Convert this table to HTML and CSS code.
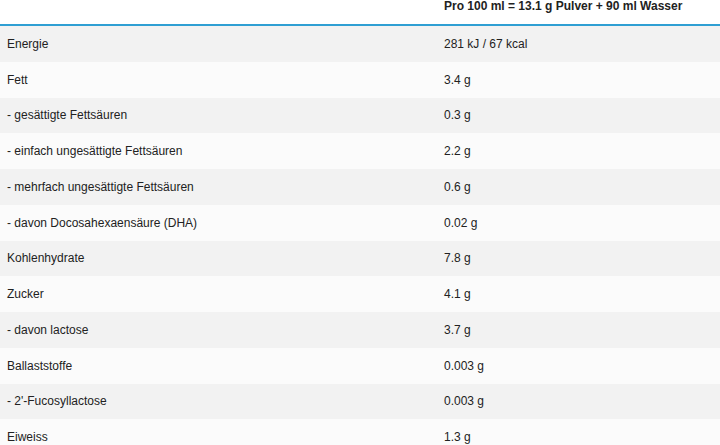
FILE: index.html
```html
<!DOCTYPE html>
<html lang="de">
<head>
<meta charset="utf-8">
<link rel="stylesheet" href="styles.css">
</head>
<body>
<div class="table">
  <div class="row head"><div class="cell"></div><div class="cell">Pro 100 ml = 13.1 g Pulver + 90 ml Wasser</div></div>
  <div class="row odd"><div class="cell">Energie</div><div class="cell">281 kJ / 67 kcal</div></div>
  <div class="row even"><div class="cell">Fett</div><div class="cell">3.4 g</div></div>
  <div class="row odd"><div class="cell">- gesättigte Fettsäuren</div><div class="cell">0.3 g</div></div>
  <div class="row even"><div class="cell">- einfach ungesättigte Fettsäuren</div><div class="cell">2.2 g</div></div>
  <div class="row odd"><div class="cell">- mehrfach ungesättigte Fettsäuren</div><div class="cell">0.6 g</div></div>
  <div class="row even"><div class="cell">- davon Docosahexaensäure (DHA)</div><div class="cell">0.02 g</div></div>
  <div class="row odd"><div class="cell">Kohlenhydrate</div><div class="cell">7.8 g</div></div>
  <div class="row even"><div class="cell">Zucker</div><div class="cell">4.1 g</div></div>
  <div class="row odd"><div class="cell">- davon lactose</div><div class="cell">3.7 g</div></div>
  <div class="row even"><div class="cell">Ballaststoffe</div><div class="cell">0.003 g</div></div>
  <div class="row odd"><div class="cell">- 2'-Fucosyllactose</div><div class="cell">0.003 g</div></div>
  <div class="row even"><div class="cell">Eiweiss</div><div class="cell">1.3 g</div></div>
</div>
</body>
</html>
```
FILE: styles.css
```css
html, body {
  margin: 0;
  padding: 0;
  background: #ffffff;
}
body {
  font-family: "Liberation Sans", Arial, sans-serif;
  font-size: 12px;
  color: #222222;
  overflow: hidden;
}
.table {
  display: flex;
  flex-direction: column;
  width: 720px;
}
.row {
  display: grid;
  grid-template-columns: 438px 1fr;
  align-items: center;
  height: 35.75px;
}
.cell {
  padding-left: 7px;
  white-space: nowrap;
}
.row .cell:last-child {
  padding-left: 6px;
}
.head {
  height: 24px;
  align-items: start;
  border-bottom: 2px solid #2f9fd3;
  font-weight: bold;
}
.head .cell {
  line-height: 12px;
  padding-top: 0;
}
.odd {
  background: #f2f2f2;
}
.even {
  background: #fbfbfb;
}
```
